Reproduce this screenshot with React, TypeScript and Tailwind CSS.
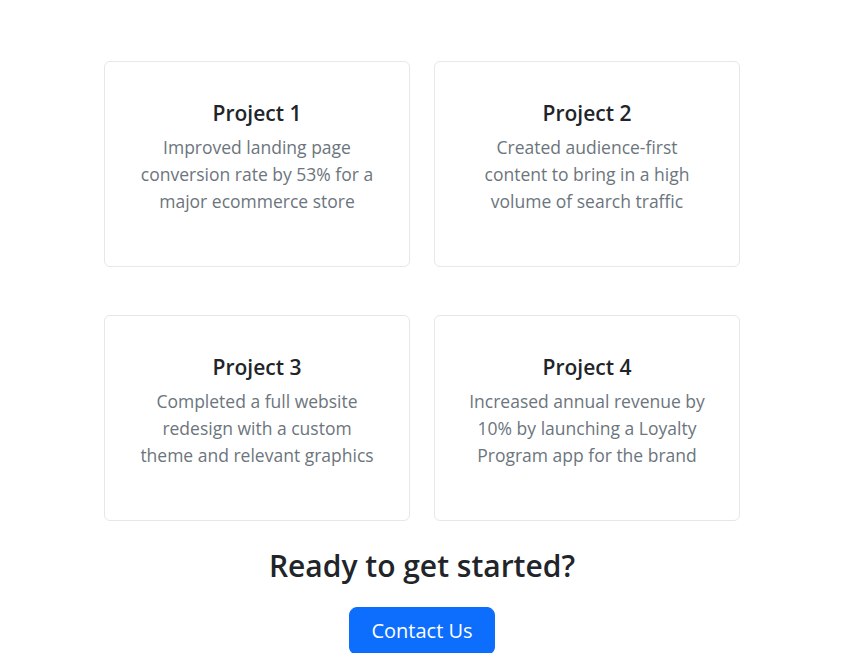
const projects = [
  {
    title: "Project 1",
    lines: ["Improved landing page", "conversion rate by 53% for a", "major ecommerce store"],
  },
  {
    title: "Project 2",
    lines: ["Created audience-first", "content to bring in a high", "volume of search traffic"],
  },
  {
    title: "Project 3",
    lines: ["Completed a full website", "redesign with a custom", "theme and relevant graphics"],
  },
  {
    title: "Project 4",
    lines: ["Increased annual revenue by", "10% by launching a Loyalty", "Program app for the brand"],
  },
];

export default function App() {
  return (
    <div
      className="w-[844px] bg-white pt-[61px] text-[#212529]"
      style={{ fontFamily: '"Open Sans", "Noto Sans", sans-serif' }}
    >
      <div className="mx-auto grid w-[636px] grid-cols-2 gap-x-6 gap-y-[48px]">
        {projects.map((p) => (
          <div
            key={p.title}
            className="h-[206px] rounded-md border border-[#e5e7eb] px-4 pt-[37px] text-center"
          >
            <h4 className="mb-[6px] text-[21px] font-semibold leading-[29px]">{p.title}</h4>
            <p className="text-[17.5px] leading-[27px] text-[#6c757d]">
              {p.lines.map((l) => (
                <span key={l} className="block">
                  {l}
                </span>
              ))}
            </p>
          </div>
        ))}
      </div>
      <div className="mt-[26px] flex flex-col items-center">
        <h2 className="mb-[22px] text-[30px] font-semibold leading-[38px]">Ready to get started?</h2>
        <button className="rounded-lg border border-[#0d6efd] bg-[#0d6efd] px-[21px] py-2 text-[20px] leading-[30px] text-white">
          Contact Us
        </button>
      </div>
    </div>
  );
}
